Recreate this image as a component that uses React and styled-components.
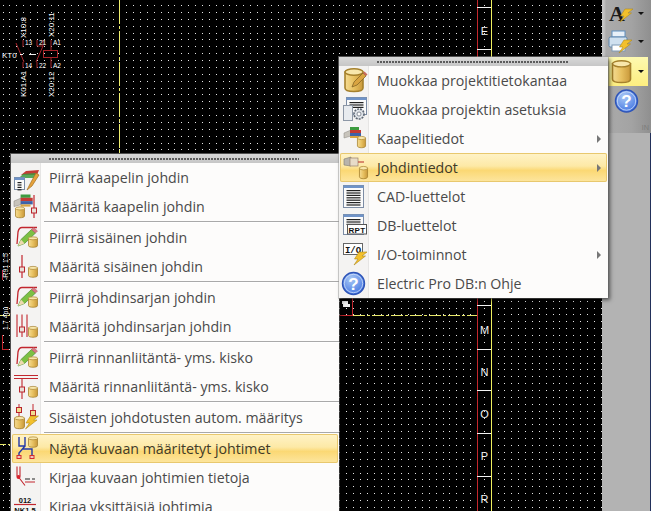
import React from 'react';
import styled, { createGlobalStyle } from 'styled-components';

const GlobalStyle = createGlobalStyle`
  html, body { margin: 0; padding: 0; background: #000; }
`;

const Screen = styled.div`
  position: relative;
  display: flex;
  width: 651px;
  height: 511px;
  overflow: hidden;
  background: #000;
  font-family: "Open Sans", "Liberation Sans", sans-serif;
`;

const Canvas = styled.div`
  flex: 1;
  height: 100%;
`;

const Panel = styled.div`
  display: flex;
  flex-direction: column;
  width: 49px;
  background: #b3b3b3;
  border-right: 1px solid #22305a;
  box-sizing: border-box;
`;

const Toolbar = styled.div`
  display: flex;
  flex-direction: column;
  height: 133px;
  margin-right: -1px;
  background: linear-gradient(90deg, #c4c4c4 0, #c4c4c4 2px, #ababab 4px, #a3a3a3 60%, #8f8f8f 100%);
`;

const ToolButton = styled.div`
  position: relative;
  display: flex;
  align-items: center;
  height: ${p => p.$height}px;
  margin: 0 3px 0 5px;
  background: ${p => (p.$active ? 'linear-gradient(180deg, #fdf9b0, #fdee80)' : 'transparent')};
`;

const Caret = styled.span`
  position: absolute;
  left: 31px;
  top: 50%;
  margin-top: -2px;
  border-left: 3px solid transparent;
  border-right: 3px solid transparent;
  border-top: 3px solid #111;
`;

const GripEnd = styled.div`
  margin-top: auto;
  margin-bottom: 1px;
  padding-right: 2px;
  text-align: right;
  font-size: 7px;
  line-height: 9px;
  color: #777;
`;

const Menu = styled.div`
  position: absolute;
  left: ${p => p.$left}px;
  top: ${p => p.$top}px;
  width: ${p => p.$width}px;
  background: linear-gradient(90deg, #f4f3f2 0, #f4f3f2 29px, #e6e5e4 29px, #e6e5e4 30px, #fdfcfb 30px);
  box-shadow: 2px 2px 4px rgba(0, 0, 0, 0.55), 0 0 0 1px rgba(170, 170, 170, 0.5);
`;

const Grip = styled.div`
  display: flex;
  align-items: center;
  justify-content: center;
  height: 9px;
  padding-right: 3px;
  background: linear-gradient(180deg, #d8d8d8, #c6c6c6);
  &::before {
    content: '';
    display: block;
    width: ${p => p.$length}px;
    height: 2px;
    background: repeating-linear-gradient(90deg, #5c5c5c 0, #5c5c5c 2px, transparent 2px, transparent 3px);
  }
`;

const Item = styled.div`
  position: relative;
  display: flex;
  align-items: center;
  height: 29px;
  margin: 0 1px;
  box-sizing: border-box;
  color: #4a4a4a;
  font-size: 14.2px;
  white-space: nowrap;
  ${p => p.$active && `
    background: linear-gradient(180deg, #fff3c8 0, #fde9a6 45%, #fbd874 60%, #fde6a0 100%);
    box-shadow: inset 0 0 0 1px #e8c86e;
    border-radius: 2px;
    color: #3f3a28;
  `}
`;

const IconSlot = styled.svg`
  flex: none;
  width: 32px;
  height: 29px;
  margin-right: 5px;
`;

const Arrow = styled.span`
  position: absolute;
  right: 6px;
  top: 50%;
  margin-top: -4px;
  border-top: 4px solid transparent;
  border-bottom: 4px solid transparent;
  border-left: 4px solid #777;
`;

const Separator = styled.div`
  height: 2px;
  margin-left: 33px;
  background: linear-gradient(180deg, #a9a9a9 50%, #fff 50%);
`;

const Db = ({ x, y, w = 10, h = 12 }) => (
  <g transform={`translate(${x} ${y}) scale(${w / 10} ${h / 12})`}>
    <path d="M.5 2V10C.5 12.3 9.5 12.3 9.5 10V2Z" fill="url(#dbBody)" stroke="#a5802c" strokeWidth=".8" />
    <ellipse cx="5" cy="2" rx="4.5" ry="1.6" fill="#f8e7ac" stroke="#a5802c" strokeWidth=".7" />
  </g>
);

const Bolt = ({ x, y, s = 1 }) => (
  <path
    transform={`translate(${x} ${y}) scale(${s})`}
    d="M6 0H14L9 4H12.5L1 13L5 7H1.5Z"
    fill="#f3c02c"
    stroke="#b08a1c"
    strokeWidth=".6"
  />
);

const Node = ({ x, y, color = '#b9242c', fill = '#e8e0d8' }) => (
  <rect x={x - 2.5} y={y - 2.5} width="5" height="5" fill={fill} stroke={color} strokeWidth="1" />
);

const Cable = ({ x, y, s = 1 }) => (
  <g transform={`translate(${x} ${y}) scale(${s})`}>
    <path d="M0 6L7 3V9L0 11Z" fill="#c8c4bc" stroke="#8b8780" strokeWidth=".5" />
    <rect x="6" y="0" width="9" height="3" fill="#3c9b3f" />
    <rect x="6" y="3" width="11" height="3" fill="#c23a34" />
    <rect x="6" y="6" width="11" height="3" fill="#3e62a8" />
    <rect x="6" y="9" width="9" height="2" fill="#d9a441" />
  </g>
);

const GreenPencil = () => (
  <g>
    <path d="M10 4.5H25M10 4.5C7.5 4.5 6.5 6.5 6 9L5 21" fill="none" stroke="#c2262e" strokeWidth="1.3" />
    <path d="M6 23L9 16.5L19.5 6.5L23.5 10L12.5 20.5Z" fill="#7cc043" stroke="#4a8a2a" strokeWidth=".7" />
    <path d="M19.5 6.5L21.5 4.5L25.5 8L23.5 10Z" fill="#d87a84" stroke="#a85a60" strokeWidth=".5" />
    <path d="M6 23L9 16.5L12.5 20.5Z" fill="#eed9b0" />
    <Db x={16} y={13.5} w={10} h={11} />
  </g>
);

const SheetLines = ({ x, y, w, h, lines }) => (
  <g>
    <rect x={x + 0.5} y={y + 0.5} width={w} height={h} fill="#fbfbfb" stroke="#7c8ca4" />
    <rect x={x + 0.5} y={y + 0.5} width={w} height="2.5" fill="#6f93c8" />
    {Array.from({ length: lines }, (_, i) => (
      <rect key={i} x={x + 3.5} y={y + 5 + i * 2.4} width={w - 6} height="1.2" fill="#222" />
    ))}
  </g>
);

const Help = ({ x, y, r, size }) => (
  <g>
    <circle cx={x} cy={y} r={r} fill="url(#helpFill)" stroke="#2f55b8" strokeWidth="1.4" />
    <circle cx={x} cy={y} r={r - 1.8} fill="none" stroke="#dbe8fb" strokeWidth=".7" />
    <text x={x} y={y + size * 0.37} textAnchor="middle" fontFamily="Liberation Sans, sans-serif" fontWeight="700" fontSize={size} fill="#fff">?</text>
  </g>
);

const leftIcons = {
  drawCable: (
    <g>
      <path d="M9 12L14 8L27 7L25 12Z" fill="#c33c36" />
      <path d="M7 15L11 11L24 10L22 15Z" fill="#3c9b3f" opacity=".85" />
      <SheetLines x={2} y={14} w={10} h={12} lines={4} />
      <path d="M15 27L18 21L24 10L27 12L20 23Z" fill="#e6a23c" stroke="#a06f20" strokeWidth=".7" />
    </g>
  ),
  setCable: (
    <g>
      <Cable x={2} y={2.5} s={1.1} />
      <Db x={3} y={14.5} w={10} h={11.5} />
      <path d="M22 3V26" stroke="#c2262e" strokeWidth="1.2" />
      <Node x={22} y={18.5} />
    </g>
  ),
  setInner: (
    <g>
      <path d="M10 3V26" stroke="#c2262e" strokeWidth="1.2" />
      <Node x={10} y={17.5} />
      <Db x={16} y={14} w={10} h={11.5} />
    </g>
  ),
  setHarness: (
    <g>
      <path d="M5 2.5V25M10 2.5V25M15 2.5V25" stroke="#c2262e" strokeWidth="1.1" />
      <Node x={10} y={17.5} />
      <Db x={16} y={14} w={10} h={11.5} />
    </g>
  ),
  setBus: (
    <g>
      <path d="M2 3.5H26M2 6.5H26M10 6.5V27" stroke="#c2262e" strokeWidth="1.1" />
      <Node x={10} y={17.5} />
      <Db x={16} y={14} w={10} h={11.5} />
    </g>
  ),
  auto: (
    <g>
      <path d="M7 1V14M21 1V14" stroke="#c2262e" strokeWidth="1" />
      <Node x={7} y={7} fill="#f2dc90" />
      <Node x={21} y={10} fill="#f2dc90" />
      <Db x={2} y={13} w={11} h={13} />
      <Bolt x={12.5} y={13} />
    </g>
  ),
  show: (
    <g>
      <path d="M7 3V12H13V3M13 12L7 19V22M11 15H20V22" fill="none" stroke="#2338a8" strokeWidth="1.4" />
      <rect x="5" y="21.5" width="4" height="3" fill="#f2c6c0" stroke="#d22d2d" />
      <rect x="18" y="21.5" width="4" height="3" fill="#f2c6c0" stroke="#d22d2d" />
      <Db x={16} y={2.5} w={10} h={11} />
    </g>
  ),
  writeInfo: (
    <g>
      <path d="M5 3.5V13.5M8 3.5V13.5M6.5 14L13 22.5" fill="none" stroke="#c2262e" strokeWidth="1.1" />
      <circle cx="6.5" cy="14" r="2" fill="#d8222c" />
      <path d="M13 16H18M20 16H23" stroke="#222" strokeWidth="1" />
      <path d="M13 19H23" stroke="#c2262e" strokeWidth="1" />
    </g>
  ),
  writeSingle: (
    <g>
      <text x="13" y="10.5" textAnchor="middle" fontFamily="Liberation Sans, sans-serif" fontWeight="700" fontSize="7.5" fill="#111">012</text>
      <path d="M2 12.5H24" stroke="#c2262e" strokeWidth="1.2" />
      <text x="13" y="21" textAnchor="middle" fontFamily="Liberation Sans, sans-serif" fontWeight="700" fontSize="7.5" fill="#111">NK1.5</text>
    </g>
  ),
};

const rightIcons = {
  editDb: (
    <g>
      <Db x={5} y={2} w={20} h={24} />
      <path d="M13 21L15 16L24 7L27 10L18 19Z" fill="#d9a441" stroke="#7a5c20" strokeWidth=".7" />
      <path d="M24 7L25.5 5.5L28.5 8.5L27 10Z" fill="#c86a5c" />
    </g>
  ),
  settings: (
    <g>
      <SheetLines x={7} y={2} w={20} h={17} lines={3} />
      <rect x="4.5" y="10.5" width="9" height="15" fill="#e8ebef" stroke="#8d97a6" />
      <circle cx="20" cy="19" r="5" fill="#dfe3e8" stroke="#5d6673" strokeWidth="1.6" strokeDasharray="2 1" />
      <circle cx="20" cy="19" r="2" fill="#fff" stroke="#5d6673" strokeWidth=".7" />
    </g>
  ),
  cables: (
    <g>
      <Cable x={5} y={3} />
      <Db x={18} y={12} w={9} h={12} />
    </g>
  ),
  wires: (
    <g>
      <path d="M5 6L12 4V13L5 12Z" fill="#b8b4ac" stroke="#7d7a74" strokeWidth=".6" />
      <rect x="11" y="5" width="8" height="8" fill="#e8dcc8" stroke="#97806c" strokeWidth=".7" />
      <path d="M19 9H25" stroke="#c04840" strokeWidth="1.2" />
      <Db x={20} y={13} w={9} h={13} />
    </g>
  ),
  cad: <SheetLines x={4} y={3} w={20} h={22} lines={7} />,
  db: (
    <g>
      <SheetLines x={4} y={3} w={20} h={20} lines={3} />
      <rect x="8.5" y="13.5" width="19" height="9.5" fill="#fff" stroke="#555" />
      <text x="18" y="21.5" textAnchor="middle" fontFamily="Liberation Sans, sans-serif" fontWeight="700" fontSize="8" letterSpacing=".4" fill="#111">RPT</text>
    </g>
  ),
  io: (
    <g>
      <rect x="4.5" y="3.5" width="19" height="11" fill="#fff" stroke="#666" />
      <text x="14" y="12.5" textAnchor="middle" fontFamily="Liberation Mono, monospace" fontWeight="700" fontSize="9" fill="#111">I/O</text>
      <Bolt x={14} y={12} />
    </g>
  ),
  help: <Help x={14.5} y={14.5} r={11} size={17} />,
};

const leftMenu = [
  { label: 'Piirrä kaapelin johdin', icon: leftIcons.drawCable },
  { label: 'Määritä kaapelin johdin', icon: leftIcons.setCable },
  { sep: true },
  { label: 'Piirrä sisäinen johdin', icon: <GreenPencil /> },
  { label: 'Määritä sisäinen johdin', icon: leftIcons.setInner },
  { sep: true },
  { label: 'Piirrä johdinsarjan johdin', icon: <GreenPencil /> },
  { label: 'Määritä johdinsarjan johdin', icon: leftIcons.setHarness },
  { sep: true },
  { label: 'Piirrä rinnanliitäntä- yms. kisko', icon: <GreenPencil /> },
  { label: 'Määritä rinnanliitäntä- yms. kisko', icon: leftIcons.setBus },
  { sep: true },
  { label: 'Sisäisten johdotusten autom. määritys', icon: leftIcons.auto },
  { sep: true },
  { label: 'Näytä kuvaan määritetyt johtimet', icon: leftIcons.show, active: true },
  { label: 'Kirjaa kuvaan johtimien tietoja', icon: leftIcons.writeInfo },
  { label: 'Kirjaa yksittäisiä johtimia', icon: leftIcons.writeSingle },
];

const rightMenu = [
  { label: 'Muokkaa projektitietokantaa', icon: rightIcons.editDb },
  { label: 'Muokkaa projektin asetuksia', icon: rightIcons.settings },
  { label: 'Kaapelitiedot', icon: rightIcons.cables, sub: true },
  { label: 'Johdintiedot', icon: rightIcons.wires, sub: true, active: true },
  { label: 'CAD-luettelot', icon: rightIcons.cad },
  { label: 'DB-luettelot', icon: rightIcons.db },
  { label: 'I/O-toiminnot', icon: rightIcons.io, sub: true },
  { label: 'Electric Pro DB:n Ohje', icon: rightIcons.help },
];

// grid dots land on whole pixels, pitch is not an integer in the source
const gridPath = () => {
  let d = '';
  for (let i = 0; i < 90; i++) {
    for (let j = 0; j < 76; j++) {
      d += `M${Math.round(2.5 + i * 6.875)} ${Math.round(5 + j * 6.875)}h1v1h-1z`;
    }
  }
  return d;
};

const Tag = ({ x, y, children, size = 8, rotate }) => (
  <text
    x={x}
    y={y}
    fill="#fff"
    fontFamily="Liberation Sans, sans-serif"
    fontSize={size}
    transform={rotate ? `rotate(-90 ${x} ${y})` : undefined}
  >
    {children}
  </text>
);

const sheetLetters = [
  ['E', 31],
  ['M', 330],
  ['N', 372],
  ['O', 414],
  ['P', 456],
  ['R', 499],
];

const Drawing = () => (
  <svg width="602" height="511" style={{ display: 'block' }}>
    <defs>
      <linearGradient id="dbBody" x1="0" x2="1" y1="0" y2="0">
        <stop offset="0" stopColor="#f5dc93" />
        <stop offset=".5" stopColor="#e7c060" />
        <stop offset="1" stopColor="#c9983a" />
      </linearGradient>
      <radialGradient id="helpFill" cx=".4" cy=".3" r=".8">
        <stop offset="0" stopColor="#a9c8f5" />
        <stop offset="1" stopColor="#3a6ee0" />
      </radialGradient>
    </defs>
    <path d={gridPath()} fill="#e6e6e6" shapeRendering="crispEdges" />
    <g shapeRendering="crispEdges" strokeWidth="1">
      <path d="M119.5 0V154" stroke="#f0f070" strokeDasharray="24 2 3 2" />
      <path d="M477.5 0V60M477.5 295V511" stroke="#c4262c" />
      <path d="M491.5 0V60M491.5 295V511" stroke="#f0f060" />
      <path d="M477 7.5H491M477 49.5H491M477 305.5H491M477 349.5H491M477 390.5H491M477 433.5H491M477 476.5H491" stroke="#f4f4f4" />
      <path d="M352.5 298V315.5H339" fill="none" stroke="#c4262c" />
      <path d="M353 315.5H477" stroke="#e8e86a" strokeDasharray="12 2 3 2" />
      <path d="M0 315.5H10M0 444.5H10" stroke="#e8e86a" strokeDasharray="6 2" />
      <path d="M2.5 270V280M2.5 335V349.5H9" fill="none" stroke="#c4262c" />
    </g>
    {sheetLetters.map(([t, y]) => (
      <text key={t} x="484.5" y={y + 4} textAnchor="middle" fill="#f2f2f2" fontFamily="Liberation Sans, sans-serif" fontSize="11">{t}</text>
    ))}
    <g stroke="#a8242a" strokeWidth="1" fill="none">
      <path d="M16 43L24 62M23 40V47M23 62V68M37 40V46H43V40M43 46L36 62M37 62V68M51 40V50M51 58V68" />
      <rect x="43.5" y="50.5" width="14" height="7" />
    </g>
    <path d="M20 54.5H23M29 54.5H36" stroke="#eee" strokeWidth="1" />
    <Tag x={2} y={58}>KT0</Tag>
    <Tag x={25} y={45} size={6.5}>13</Tag>
    <Tag x={39} y={45} size={6.5}>21</Tag>
    <Tag x={53} y={45} size={6.5}>A1</Tag>
    <Tag x={25} y={68} size={6.5}>14</Tag>
    <Tag x={39} y={68} size={6.5}>22</Tag>
    <Tag x={53} y={68} size={6.5}>A2</Tag>
    <Tag x={26} y={38} rotate>X10:8</Tag>
    <Tag x={54} y={37} rotate>X20:11</Tag>
    <Tag x={26} y={97} rotate>K01:A1</Tag>
    <Tag x={54} y={97} rotate>X20:12</Tag>
    <Tag x={8} y={280} rotate size={7}>-R91 1:5</Tag>
    <Tag x={8} y={330} rotate size={7}>1.7 4pu</Tag>
    <path d="M342 301h6v3h2v3h-7v-3h-1z" fill="#eee" />
  </svg>
);

const MenuRows = ({ rows, shift = 0 }) =>
  rows.map((row, i) =>
    row.sep ? (
      <Separator key={i} />
    ) : (
      <Item key={i} $active={row.active}>
        <IconSlot viewBox={`${shift} 0 32 29`}>{row.icon}</IconSlot>
        {row.label}
        {row.sub && <Arrow />}
      </Item>
    )
  );

export default function App() {
  return (
    <Screen>
      <GlobalStyle />
      <Canvas>
        <Drawing />
      </Canvas>
      <Panel>
        <Toolbar>
          <ToolButton $height={27}>
            <svg width="30" height="27">
              <text x="2" y="21" fontFamily="Liberation Serif, serif" fontWeight="700" fontSize="22" fill="#1a1a1a">A</text>
              <Bolt x={12} y={9} />
            </svg>
            <Caret />
          </ToolButton>
          <ToolButton $height={30}>
            <svg width="30" height="30">
              <rect x="5" y="4" width="13" height="6" fill="#e8f0f8" stroke="#5f8fc0" />
              <rect x="2" y="10" width="18" height="10" rx="1.5" fill="#cfe0ef" stroke="#5c84ac" />
              <rect x="5" y="18" width="13" height="6" fill="#fff" stroke="#7f9ab5" />
              <Bolt x={11} y={13} />
            </svg>
            <Caret />
          </ToolButton>
          <ToolButton $height={29} $active>
            <svg width="30" height="29">
              <Db x={4.5} y={3} w={20} h={23} />
            </svg>
            <Caret />
          </ToolButton>
          <ToolButton $height={30}>
            <svg width="36" height="30">
              <Help x={19.5} y={15} r={11} size={17} />
            </svg>
          </ToolButton>
          <GripEnd>IN</GripEnd>
        </Toolbar>
      </Panel>
      <Menu $left={11} $top={154} $width={328}>
        <Grip $length={250} />
        <MenuRows rows={leftMenu} />
      </Menu>
      <Menu $left={339} $top={57} $width={269}>
        <Grip $length={191} />
        <MenuRows rows={rightMenu} shift={1} />
      </Menu>
    </Screen>
  );
}
